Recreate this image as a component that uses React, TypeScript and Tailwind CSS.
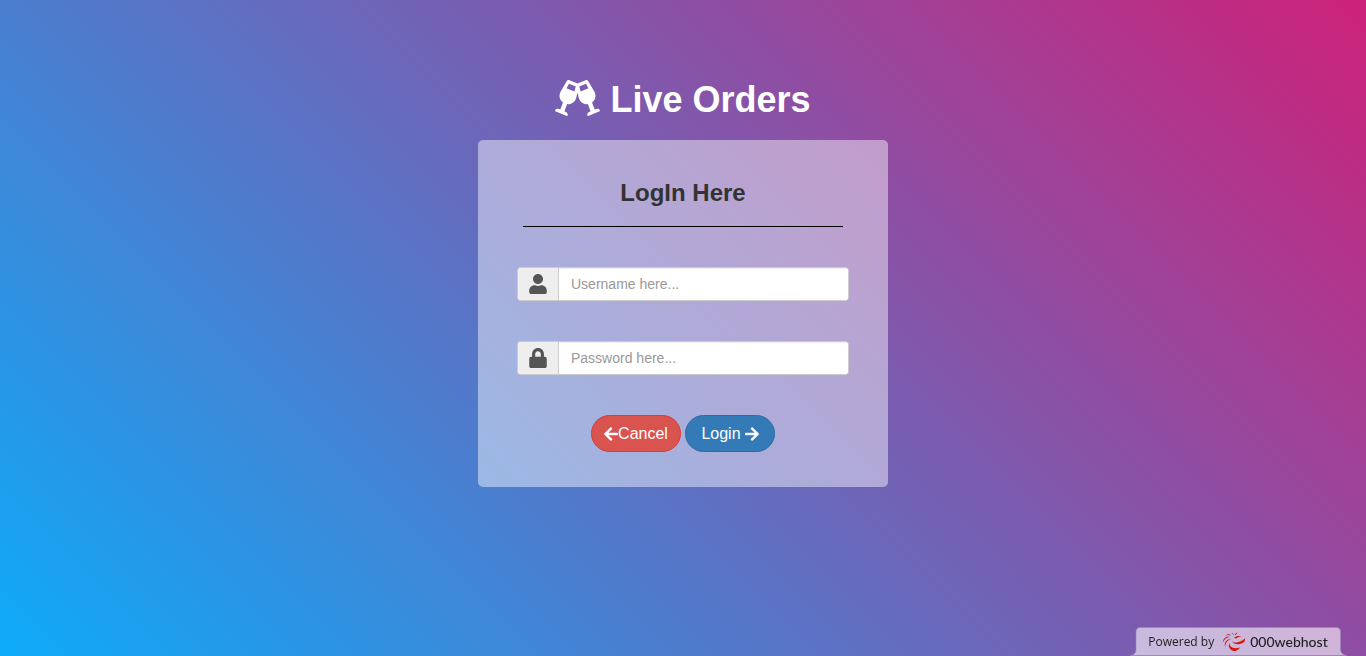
import { FaArrowLeft, FaArrowRight, FaGlassCheers, FaLock, FaUser } from "react-icons/fa";
import type { ReactNode } from "react";

type FieldProps = {
  id: string;
  label: string;
  type: string;
  placeholder: string;
  icon: ReactNode;
};

function Field({ id, label, type, placeholder, icon }: FieldProps) {
  return (
    <div className="flex h-[34px] w-full overflow-hidden rounded border border-[#ccc] bg-white">
      <label
        htmlFor={id}
        aria-label={label}
        className="flex w-[41px] shrink-0 items-center justify-center border-r border-[#ccc] bg-[#eee] text-xl text-[#555]"
      >
        {icon}
      </label>
      <input
        id={id}
        type={type}
        placeholder={placeholder}
        className="min-w-0 flex-1 bg-white px-3 text-sm text-[#555] shadow-[inset_0_1px_1px_rgba(0,0,0,0.075)] outline-none placeholder:text-[#999]"
      />
    </div>
  );
}

function HostLogo() {
  return (
    <svg viewBox="0 0 24 20" className="h-5 w-6" fill="#d9190b" aria-hidden="true">
      <path d="M10.200 8.200C11 11.500 16.500 11.800 23.200 6.200c-.1 1.400-.4 2.700-.9 3.800-5 3.600-11.600 3-12.100-1.800z" />
      <path d="M7.400 10.500c-.2 4.500 4 7 10.800 5-1.400 1.800-3 3-4.700 3.600C8.500 19.200 5.400 15 7.400 10.500z" />
      <path d="M12.200 5.600c2.500-2.200 5.600-2 7.500-.8-1.900 0-3.700.4-5.200 1.400-.9.600-2 .4-2.300-.6z" />
      <path d="M9.200 6.900C5.500 8 3.200 11 3.200 15.200 1.700 10.800 4.500 6.600 9.200 6.900z" />
      <path d="M8 5C5 5.200 2.300 7.200.8 10.500 1 6.500 4.200 3.600 8 5z" />
      <path d="M8.800 3.700C7.200 2.800 5.300 2.800 3.400 4 5 1.700 7.800 1.700 8.800 3.700z" />
      <path d="M11.200 3.400C10.900 2.100 10.200 1.400 9 1.100c1.900-.4 3 .5 2.200 2.300z" />
      <path d="M12.800 3.200c.2-1.400 1.200-2.300 2.700-2.600-.9.900-.9 2.300-2.700 2.600z" />
    </svg>
  );
}

export default function App() {
  return (
    <main className="relative flex min-h-screen flex-col items-center bg-[linear-gradient(45deg,#0cabf9,#cd2179)] px-4 pt-20 pb-12 font-['Liberation_Sans',Arial,sans-serif]">
      <h1 className="flex items-start gap-[10px] text-4xl leading-10 font-bold text-white">
        <FaGlassCheers className="h-9 w-[45px]" />
        Live Orders
      </h1>

      <form
        className="mt-5 flex w-full max-w-[410px] flex-col items-center rounded-[5px] bg-white/45 px-[39px] pt-[37px] pb-[35px]"
        onSubmit={(event) => event.preventDefault()}
      >
        <h2 className="text-2xl leading-8 font-bold text-[#333]">LogIn Here</h2>
        <hr className="mt-[17px] w-full max-w-80 border-t border-black" />
        <div className="mt-10 flex w-full flex-col gap-10">
          <Field
            id="username"
            label="Username"
            type="text"
            placeholder="Username here..."
            icon={<FaUser className="h-5 w-[18px]" />}
          />
          <Field
            id="password"
            label="Password"
            type="password"
            placeholder="Password here..."
            icon={<FaLock className="h-5 w-[18px]" />}
          />
        </div>
        <div className="mt-10 flex gap-1 text-base text-white">
          <button
            type="button"
            className="flex h-[37px] w-[90px] items-center justify-center rounded-[20px] border border-[#d43f3a] bg-[#d9534f]"
          >
            <FaArrowLeft className="h-4 w-[14px]" />
            Cancel
          </button>
          <button
            type="submit"
            className="flex h-[37px] w-[90px] items-center justify-center gap-1 rounded-[20px] border border-[#2e6da4] bg-[#337ab7]"
          >
            Login
            <FaArrowRight className="h-4 w-[14px]" />
          </button>
        </div>
      </form>

      <a
        href="#000webhost"
        className="fixed right-6 bottom-0 flex h-[29px] w-[212px] items-center justify-center"
      >
        <svg viewBox="0 0 212 29" className="absolute inset-0 h-full w-full overflow-visible" aria-hidden="true">
          <path
            d="M0 28.500C4 28 6 26 6 22V5Q6 .5 10.500.5H206Q210.500.5 210.500 5V22C210.500 26 213 28 217 28.500Z"
            fill="#fff"
            fillOpacity=".58"
            stroke="#9d83bb"
            strokeOpacity=".6"
          />
        </svg>
        <span className="relative flex items-center pl-1 text-[#222]">
          <span className="font-['Open_Sans',sans-serif] text-xs">Powered by</span>
          <span className="ml-2 flex items-center gap-1">
            <HostLogo />
            <span className="font-['Lato',sans-serif] text-sm font-medium">000webhost</span>
          </span>
        </span>
      </a>
    </main>
  );
}
